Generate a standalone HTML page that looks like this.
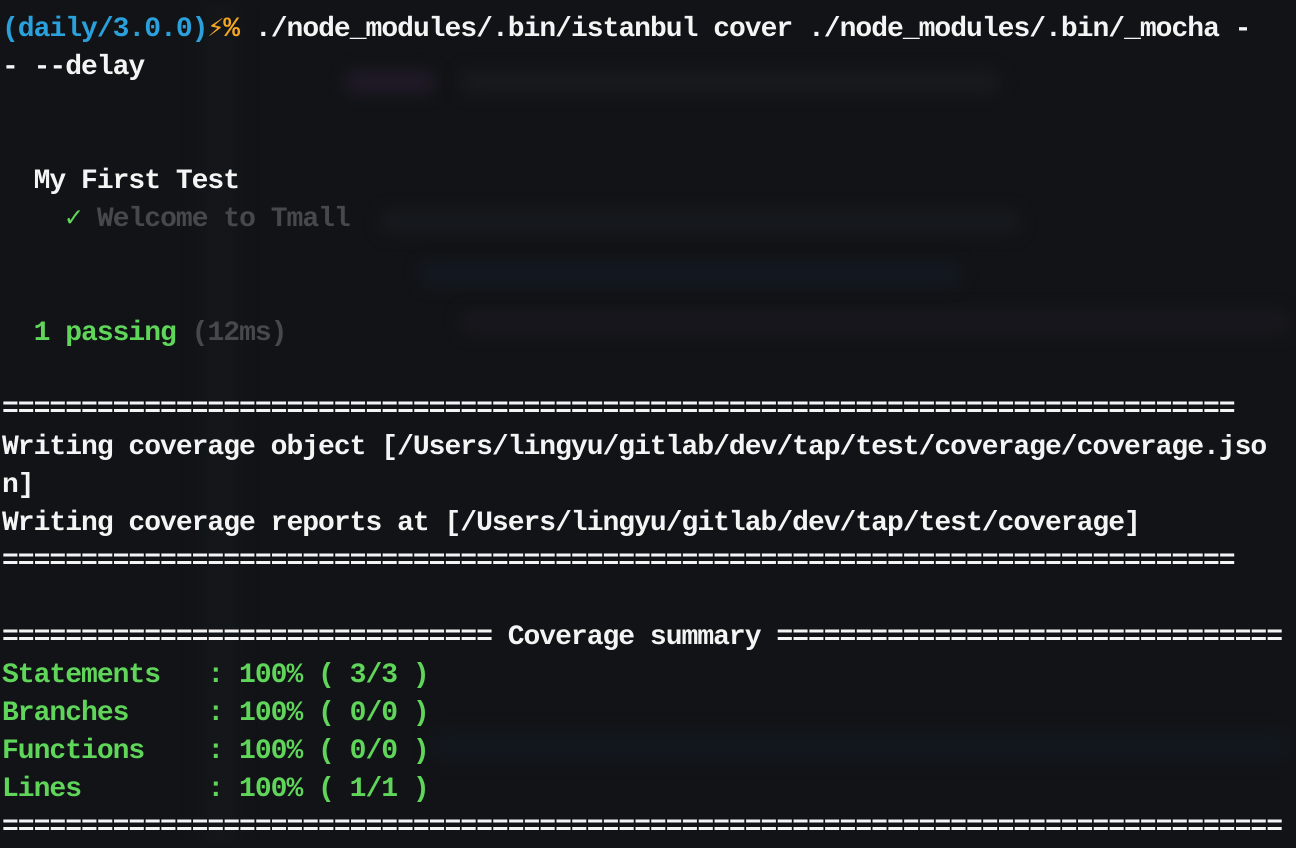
<!DOCTYPE html>
<html><head><meta charset="utf-8"><style>
html,body{margin:0;padding:0;width:1296px;height:848px;overflow:hidden;background:#111316;}
.bg{position:absolute;filter:blur(8px);border-radius:6px;opacity:.6}
pre{position:absolute;left:2px;top:11px;margin:0;font-family:"Liberation Mono","DejaVu Sans Mono",monospace;font-size:28px;letter-spacing:-1px;line-height:38px;color:#f4f4f4;white-space:pre;font-weight:bold;}
.b{color:#2aa1dc}.o{color:#f5a623}.g{color:#5fd65a}.d{color:#46484c}
</style></head><body>
<div class="bg" style="left:200px;top:0;width:40px;height:848px;background:#16191c"></div>
<div class="bg" style="left:345px;top:70px;width:90px;height:24px;background:#2a1f33"></div>
<div class="bg" style="left:460px;top:70px;width:540px;height:24px;background:#1c1f24"></div>
<div class="bg" style="left:380px;top:210px;width:640px;height:24px;background:#1a1e23"></div>
<div class="bg" style="left:420px;top:262px;width:540px;height:24px;background:#161e2a"></div>
<div class="bg" style="left:460px;top:310px;width:830px;height:24px;background:#1e1a24"></div>
<div class="bg" style="left:430px;top:730px;width:860px;height:30px;background:#141b24"></div>
<pre><span class="b">(daily/3.0.0)</span><span class="o">⚡%</span> ./node_modules/.bin/istanbul cover ./node_modules/.bin/_mocha -
- --delay


  My First Test
    <span class="g">✓</span> <span class="d">Welcome to Tmall</span>


  <span class="g">1 passing</span> <span class="d">(12ms)</span>

==============================================================================
Writing coverage object [/Users/lingyu/gitlab/dev/tap/test/coverage/coverage.jso
n]
Writing coverage reports at [/Users/lingyu/gitlab/dev/tap/test/coverage]
==============================================================================

=============================== Coverage summary ================================
<span class="g">Statements   : 100% ( 3/3 )
Branches     : 100% ( 0/0 )
Functions    : 100% ( 0/0 )
Lines        : 100% ( 1/1 )</span>
=================================================================================
</pre>
</body></html>
